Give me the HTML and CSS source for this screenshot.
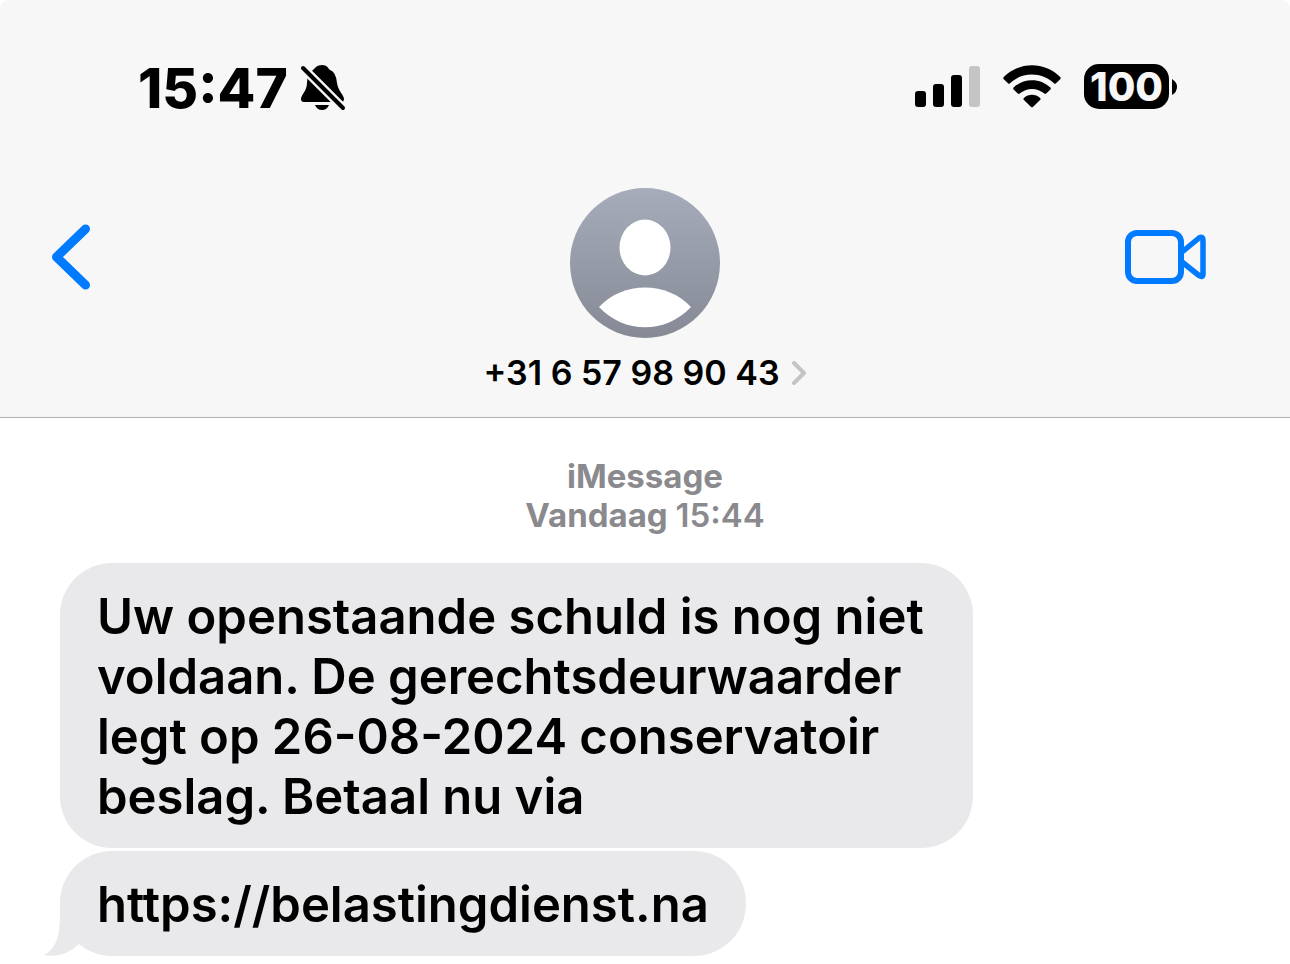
FILE: index.html
```html
<!DOCTYPE html>
<html lang="nl">
<head>
<meta charset="utf-8">
<meta name="viewport" content="width=device-width, initial-scale=1">
<title>+31 6 57 98 90 43</title>
<link rel="stylesheet" href="styles.css">
</head>
<body>
<header class="header">
  <div class="status">
    <div class="status-group status-left">
      <time class="clock">15:47</time>
      <svg class="icon" width="46" height="48" viewBox="0 0 46 48" role="img" aria-label="Stil">
        <path d="M22 1C17 1 15 4 13 6Q7 9 7 19C7 27 1 31 1 35Q1 38 4 38H41Q44 38 44 35C44 31 38 27 37 19Q36 8 30 6C28 4 27 1 22 1Z"/>
        <path d="M15 41H29Q27 46 22 46T15 41Z"/>
        <path d="M-2 -1L48 49" stroke="#f7f7f7" stroke-width="9"/>
        <path d="M3 4L43 44" stroke="#000" stroke-width="4" stroke-linecap="round"/>
      </svg>
    </div>
    <div class="status-group status-right">
      <svg class="icon" width="65" height="42" viewBox="0 0 65 42" role="img" aria-label="Signaal">
        <rect x="0" y="25" width="11" height="16" rx="3"/>
        <rect x="18" y="18" width="11" height="23" rx="3"/>
        <rect x="36" y="9" width="11" height="32" rx="3"/>
        <rect x="54" y="0" width="11" height="41" rx="3" fill="#c5c5c5"/>
      </svg>
      <svg class="icon" width="58" height="44" viewBox="0 0 58 44" role="img" aria-label="Wifi">
        <path d="M.8 14.2Q-.3 13.1.8 12C16.500-3.700 41.500-3.700 57.200 12Q58.300 13.100 57.200 14.200L53 18.300Q52 19.300 51 18.300C39 6.700 19 6.700 7 18.300Q6 19.300 5 18.300Z"/>
        <path d="M10.600 24.500Q9.700 23.600 10.600 22.600C20.500 12.700 37.500 12.700 47.400 22.600Q48.300 23.600 47.400 24.500L43.200 28.600Q42.300 29.500 41.400 28.600C34.500 22.300 23.500 22.300 16.600 28.600Q15.700 29.500 14.800 28.600Z"/>
        <path d="M20.700 34.700Q19.900 33.800 20.900 32.900C25.500 28.800 32.500 28.800 37.100 32.900Q38.100 33.800 37.300 34.700L29.900 41.900Q29 42.800 28.100 41.900Z"/>
      </svg>
      <div class="battery">
        <span class="battery-level">100</span>
        <svg width="5" height="16" viewBox="0 0 5 16" aria-hidden="true"><path d="M0 0Q5 3 5 8T0 16Z"/></svg>
      </div>
    </div>
  </div>
  <nav class="bar">
    <button class="bar-button" type="button" aria-label="Terug">
      <svg width="40" height="66" viewBox="0 0 40 66" fill="none" stroke="#007aff" stroke-linecap="round" stroke-linejoin="round" stroke-width="9"><path d="M34.500 5L5.500 33L34.500 61"/></svg>
    </button>
    <button class="contact" type="button">
      <svg class="avatar" width="150" height="150" viewBox="0 0 150 150" aria-hidden="true">
        <defs><linearGradient id="shade" x1="0" y1="0" x2="0" y2="1"><stop offset="0" stop-color="#a6acba"/><stop offset="1" stop-color="#858a95"/></linearGradient></defs>
        <circle cx="75" cy="75" r="75" fill="url(#shade)"/>
        <ellipse cx="75" cy="59.500" rx="25.500" ry="28" fill="#fff"/>
        <path d="M29 119C53 93 97 93 121 119C96 146 54 146 29 119Z" fill="#fff"/>
      </svg>
      <span class="contact-name">+31 6 57 98 90 43
        <svg width="15" height="24" viewBox="0 0 15 24" fill="none" stroke="#c4c4c6" stroke-width="4" stroke-linecap="round" stroke-linejoin="round" aria-hidden="true"><path d="M2 2L12 12L2 22"/></svg>
      </span>
    </button>
    <button class="bar-button bar-end" type="button" aria-label="Video">
      <svg width="82" height="56" viewBox="0 0 82 56" fill="none" stroke="#007aff" stroke-width="6" stroke-linejoin="round"><rect x="3" y="4" width="53" height="48" rx="9"/><path d="M57 23L74 9Q78 7 78 11V45Q78 49 74 46.500L57 33" stroke-width="5.500"/></svg>
    </button>
  </nav>
</header>
<main class="thread">
  <p class="stamp">iMessage<br>Vandaag <time class="stamp-time">15:44</time></p>
  <p class="bubble">Uw openstaande schuld is nog niet voldaan. De gerechtsdeurwaarder legt op 26-08-2024 conservatoir beslag. Betaal nu via</p>
  <p class="bubble bubble-last">https://belastingdienst.na
    <svg class="tail" width="40" height="46" viewBox="0 0 40 46" aria-hidden="true"><path d="M16 0C16 24 14 37 0 45Q20 49 36 33L40 0Z"/></svg>
  </p>
</main>
</body>
</html>
```
FILE: styles.css
```css
* {
  box-sizing: border-box;
}

body {
  margin: 0;
  background: #fff;
  color: #000;
  font-family: Inter, "Liberation Sans", sans-serif;
}

svg {
  display: block;
  flex: none;
}

button {
  border: 0;
  padding: 0;
  background: none;
  color: inherit;
  font: inherit;
  cursor: pointer;
}

.header {
  border-bottom: 1px solid #b2b2b4;
  border-radius: 8px 8px 0 0;
  background: #f7f7f7;
}

.status {
  display: flex;
  align-items: center;
  justify-content: space-between;
  padding: 56px 113px 0 138px;
}

.status-group {
  display: flex;
  align-items: center;
}

.status-left {
  gap: 12px;
}

.status-right {
  gap: 23px;
  padding-bottom: 3px;
}

.clock {
  font-size: 55px;
  font-weight: 800;
  line-height: 64px;
}

.battery {
  display: flex;
  align-items: center;
  gap: 3px;
}

.battery-level {
  border-radius: 15px;
  padding: 0 6px;
  background: #000;
  color: #f7f7f7;
  font-size: 40px;
  font-weight: 800;
  line-height: 45px;
}

.bar {
  display: grid;
  grid-template-columns: 1fr auto 1fr;
  align-items: start;
  padding: 68px 51px 24px;
}

.bar-button {
  display: flex;
  align-items: center;
  height: 138px;
}

.bar-end {
  justify-self: end;
  margin-right: 32px;
}

.contact {
  display: flex;
  flex-direction: column;
  align-items: center;
  gap: 15px;
}

.contact-name {
  display: flex;
  align-items: center;
  gap: 12px;
  font-size: 34px;
  font-weight: 600;
  line-height: 40px;
}

.thread {
  display: flex;
  flex-direction: column;
  align-items: flex-start;
  gap: 3px;
  padding: 39px 60px 8px;
}

.stamp {
  align-self: center;
  margin: 0 0 25px;
  color: #8a8a8e;
  font-size: 33px;
  font-weight: 700;
  line-height: 39px;
  text-align: center;
}

.stamp-time {
  font-weight: 600;
}

.bubble {
  max-width: 78%;
  margin: 0;
  border-radius: 52px;
  padding: 24px 37px 21px;
  background: #e9e9eb;
  font-size: 49px;
  font-weight: 600;
  line-height: 60px;
}

.bubble-last {
  position: relative;
}

.tail {
  position: absolute;
  bottom: 0;
  left: -16px;
  fill: #e9e9eb;
}
```
